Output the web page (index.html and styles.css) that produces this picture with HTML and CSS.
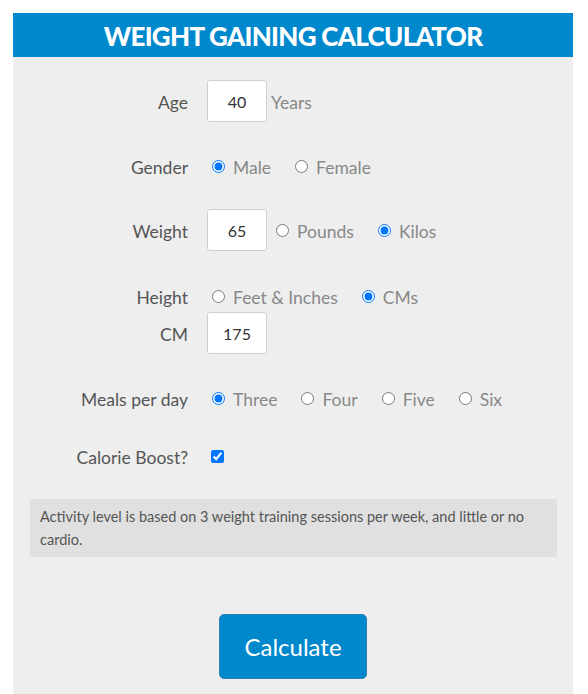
FILE: index.html
```html
<!DOCTYPE html>
<html lang="en">
<head>
    <meta charset="UTF-8">
    <meta name="viewport" content="width=device-width, initial-scale=1.0">
    <title>Weight Gaining Calculator</title>
    <link rel="stylesheet" href="styles.css">
</head>
<body>
    <div class="calculator">
        <h1 class="calc-title">WEIGHT GAINING CALCULATOR</h1>

        <form class="calc-form">
            <div class="row row-age">
                <label class="row-label" for="age">Age</label>
                <div class="row-controls">
                    <input class="num-input" id="age" type="text" value="40">
                    <span class="option-text">Years</span>
                </div>
            </div>

            <div class="row row-gender">
                <span class="row-label">Gender</span>
                <div class="row-controls">
                    <label class="option"><input type="radio" name="gender" checked> Male</label>
                    <label class="option"><input type="radio" name="gender"> Female</label>
                </div>
            </div>

            <div class="row row-weight">
                <label class="row-label" for="weight">Weight</label>
                <div class="row-controls">
                    <input class="num-input" id="weight" type="text" value="65">
                    <label class="option"><input type="radio" name="wunit"> Pounds</label>
                    <label class="option"><input type="radio" name="wunit" checked> Kilos</label>
                </div>
            </div>

            <div class="row row-height">
                <span class="row-label">Height</span>
                <div class="row-controls">
                    <label class="option"><input type="radio" name="hunit"> Feet &amp; Inches</label>
                    <label class="option"><input type="radio" name="hunit" checked> CMs</label>
                </div>
            </div>

            <div class="row row-cm">
                <label class="row-label" for="cm">CM</label>
                <div class="row-controls">
                    <input class="num-input" id="cm" type="text" value="175">
                </div>
            </div>

            <div class="row row-meals">
                <span class="row-label">Meals per day</span>
                <div class="row-controls">
                    <label class="option"><input type="radio" name="meals" checked> Three</label>
                    <label class="option"><input type="radio" name="meals"> Four</label>
                    <label class="option"><input type="radio" name="meals"> Five</label>
                    <label class="option"><input type="radio" name="meals"> Six</label>
                </div>
            </div>

            <div class="row row-boost">
                <label class="row-label" for="boost">Calorie Boost?</label>
                <div class="row-controls">
                    <input class="check" id="boost" type="checkbox" checked>
                </div>
            </div>

            <p class="info">Activity level is based on 3 weight training sessions per week, and little or no cardio.</p>

            <div class="actions">
                <button class="calc-btn" type="button">Calculate</button>
            </div>
        </form>
    </div>
</body>
</html>
```

FILE: styles.css
```css
* {
    margin: 0;
    padding: 0;
    box-sizing: border-box;
}

body {
    font-family: Lato, 'Liberation Sans', sans-serif;
    background: #fff;
    padding: 13px 15px 0 13px;
}

.calculator {
    width: 560px;
    background: #eeeeee;
    min-height: 681px;
}

.calc-title {
    background: #0088cc;
    color: #fff;
    height: 44px;
    line-height: 46px;
    text-align: center;
    font-size: 26px;
    font-weight: 900;
    letter-spacing: -0.7px;
}

.calc-form {
    padding-top: 23px;
}

.row {
    display: grid;
    grid-template-columns: 175px 1fr;
    column-gap: 19px;
    align-items: center;
    height: 42px;
    margin-bottom: 23px;
}

.row-gender {
    margin-bottom: 22px;
}

.row-weight {
    margin-bottom: 33px;
}

.row-height {
    height: 24px;
    margin-bottom: 4px;
}

.row-boost {
    height: 28px;
    margin-bottom: 29px;
}

.row-label {
    text-align: right;
    font-size: 17.5px;
    color: #555;
    padding-top: 3px;
}

.row-controls {
    display: flex;
    align-items: center;
    gap: 4px;
}

.num-input {
    width: 60px;
    height: 42px;
    border: 1px solid #cfcfcf;
    border-radius: 3px;
    background: #fff;
    text-align: center;
    font-family: inherit;
    font-size: 16px;
    color: #333;
    outline: none;
}

.option-text {
    font-size: 17.5px;
    color: #888;
    padding-top: 3px;
}

.option {
    display: flex;
    align-items: center;
    font-size: 17.5px;
    color: #888;
    margin-left: 5px;
    margin-right: 15px;
    padding-top: 3px;
}

.option input {
    width: 13px;
    height: 13px;
    margin: 0 8px 3px 0;
}

.check {
    width: 13px;
    height: 13px;
    margin-left: 4px;
}

.info {
    margin: 0 16px 0 17px;
    background: #e0e0e0;
    padding: 6px 10px;
    font-size: 14.5px;
    line-height: 23px;
    color: #555;
}

.actions {
    display: flex;
    justify-content: center;
    padding: 57px 0 20px;
}

.calc-btn {
    width: 148px;
    height: 65px;
    background: #0088cc;
    border: 1px solid #2a7fb5;
    border-radius: 5px;
    color: #fff;
    font-family: inherit;
    font-size: 24px;
}
```
